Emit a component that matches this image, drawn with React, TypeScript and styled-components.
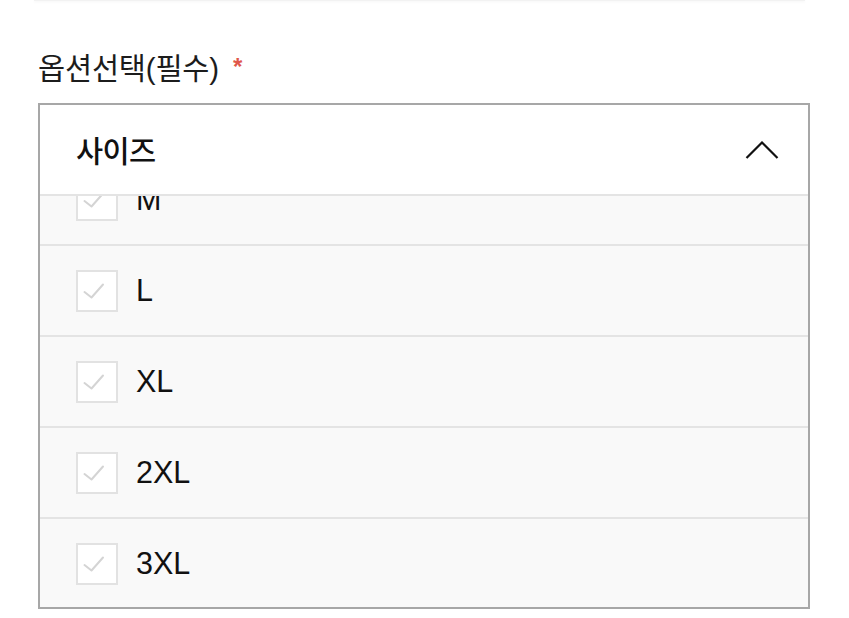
import React, { useEffect, useRef } from "react";
import styled, { createGlobalStyle } from "styled-components";

const GlobalStyle = createGlobalStyle`
  html, body {
    margin: 0;
    padding: 0;
    background: #ffffff;
  }
  body {
    font-family: "Liberation Sans", "Noto Sans CJK KR", sans-serif;
    color: #111111;
  }
`;

const Page = styled.div`
  width: 849px;
  height: 618px;
  overflow: hidden;
  display: flex;
  flex-direction: column;
  background: #ffffff;
`;

const CardEdge = styled.div`
  height: 1px;
  margin: 0 44px 0 34px;
  background: #f2f2f2;
  box-shadow: 0 1px 3px rgba(0, 0, 0, 0.07);
`;

const Section = styled.section`
  display: flex;
  flex-direction: column;
  padding: 46px 39px 0 38px;
`;

const Label = styled.div`
  display: flex;
  align-items: center;
  gap: 14px;
  height: 37px;
  font-size: 29.5px;
  color: #1c1c1c;
  letter-spacing: -0.2px;
`;

const Required = styled.span`
  color: #e0574b;
  font-size: 24px;
  font-weight: 700;
  line-height: 1;
  transform: translateY(1px);
`;

const Select = styled.div`
  margin-top: 19px;
  border: 2px solid #a7a7a7;
  display: flex;
  flex-direction: column;
  background: #ffffff;
`;

const Header = styled.div`
  height: 89px;
  display: flex;
  align-items: center;
  justify-content: space-between;
  padding: 0 29px 0 36px;
  border-bottom: 2px solid #e4e4e4;
`;

const HeaderTitle = styled.span`
  font-family: "Noto Sans CJK KR", sans-serif;
  font-size: 29.5px;
  font-weight: 500;
  color: #111111;
  letter-spacing: -0.6px;
  transform: translateY(-1px);
`;

const List = styled.ul`
  list-style: none;
  margin: 0;
  padding: 0;
  height: 411px;
  overflow-y: auto;
  scrollbar-width: none;
  background: #f9f9f9;
  &::-webkit-scrollbar {
    display: none;
  }
`;

const Row = styled.li`
  height: 89px;
  display: flex;
  align-items: center;
  gap: 18px;
  padding-left: 36px;
  border-bottom: 2px solid #e4e4e4;
  background: #f9f9f9;
`;

const Box = styled.span`
  width: 38px;
  height: 38px;
  border: 2px solid #e2e2e2;
  background: #ffffff;
  display: flex;
  align-items: center;
  justify-content: center;
  flex-shrink: 0;
`;

const RowText = styled.span`
  font-family: "Liberation Sans", sans-serif;
  font-size: 30.5px;
  color: #111111;
  line-height: 1;
`;

const sizes = ["S", "M", "L", "XL", "2XL", "3XL"];

const Check = () => (
  <svg width="38" height="38" viewBox="0 0 38 38" fill="none">
    <polyline
      points="6.5,20 13.5,25.5 25,12.5"
      stroke="#d4d4d4"
      strokeWidth="2"
      strokeLinecap="round"
      strokeLinejoin="round"
    />
  </svg>
);

const ChevronUp = () => (
  <svg width="34" height="18" viewBox="0 0 34 18" fill="none">
    <polyline
      points="1.5,17 17,1.5 32.5,17"
      stroke="#111111"
      strokeWidth="2.2"
      strokeLinejoin="miter"
    />
  </svg>
);

export default function App() {
  const listRef = useRef<HTMLUListElement>(null);

  useEffect(() => {
    if (listRef.current) listRef.current.scrollTop = 132;
  }, []);

  return (
    <Page>
      <GlobalStyle />
      <CardEdge />
      <Section>
        <Label>
          <span>옵션선택(필수)</span>
          <Required>*</Required>
        </Label>
        <Select>
          <Header>
            <HeaderTitle>사이즈</HeaderTitle>
            <ChevronUp />
          </Header>
          <List ref={listRef}>
            {sizes.map((s) => (
              <Row key={s}>
                <Box>
                  <Check />
                </Box>
                <RowText>{s}</RowText>
              </Row>
            ))}
          </List>
        </Select>
      </Section>
    </Page>
  );
}
